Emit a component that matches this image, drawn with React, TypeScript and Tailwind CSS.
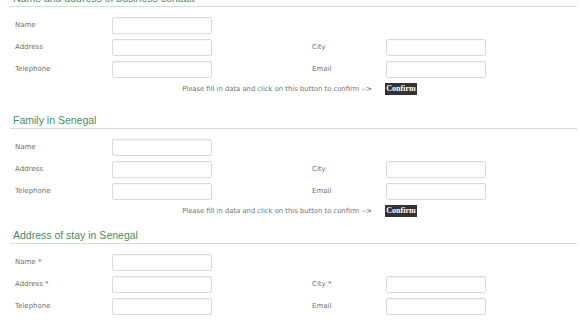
import React from 'react';

type Field = { label: string };

const fieldCls =
  'h-[17px] w-[100px] rounded-[2px] border border-[#dadada] bg-white shadow-[inset_0_1px_1px_rgba(0,0,0,0.04)]';
const fontCls = "font-['DejaVu_Sans',Verdana,sans-serif] leading-[9px] text-[#707070]";
const labelCls = `${fontCls} text-[7px]`;

function Row({ left, right }: { left: Field; right?: Field }) {
  return (
    <div className="flex h-[17px] items-center">
      <span className={`w-[97px] ${labelCls}`}>{left.label}</span>
      <div className={fieldCls} />
      {right && (
        <>
          <span className={`ml-[100px] w-[74px] ${labelCls}`}>{right.label}</span>
          <div className={fieldCls} />
        </>
      )}
    </div>
  );
}

function Section({
  title,
  starred,
  className,
}: {
  title: string;
  starred?: boolean;
  className: string;
}) {
  const s = starred ? ' *' : '';
  return (
    <section className={className}>
      <h2 className="ml-[10px] mr-[3px] border-b border-[#d4e0dc] pb-px pl-[3px] text-[10.5px] font-normal leading-[14px] text-[#3f8f63]">
        {title}
      </h2>
      <div className="mt-[10px] flex flex-col gap-[5px] pl-[15px]">
        <Row left={{ label: 'Name' + s }} />
        <Row left={{ label: 'Address' + s }} right={{ label: 'City' + s }} />
        <Row left={{ label: 'Telephone' }} right={{ label: 'Email' }} />
        <div className="flex h-[12px] items-center">
          <span className={`w-[357px] text-right ${fontCls} text-[6.8px]`}>
            Please fill in data and click on this button to confirm --&gt;
          </span>
          <button className="ml-[13px] flex h-[12px] w-[32px] items-center justify-center bg-[#333] font-['Liberation_Serif',serif] text-[8px] font-bold leading-none text-white">
            Confirm
          </button>
        </div>
      </div>
    </section>
  );
}

export default function App() {
  return (
    <div className="h-[320px] w-[580px] overflow-hidden bg-white font-['Liberation_Sans',Arial,sans-serif]">
      <Section title="Name and address of business contact" className="mt-[-9px]" />
      <Section title="Family in Senegal" className="mt-[18px]" />
      <Section title="Address of stay in Senegal" starred className="mt-[11px]" />
    </div>
  );
}
